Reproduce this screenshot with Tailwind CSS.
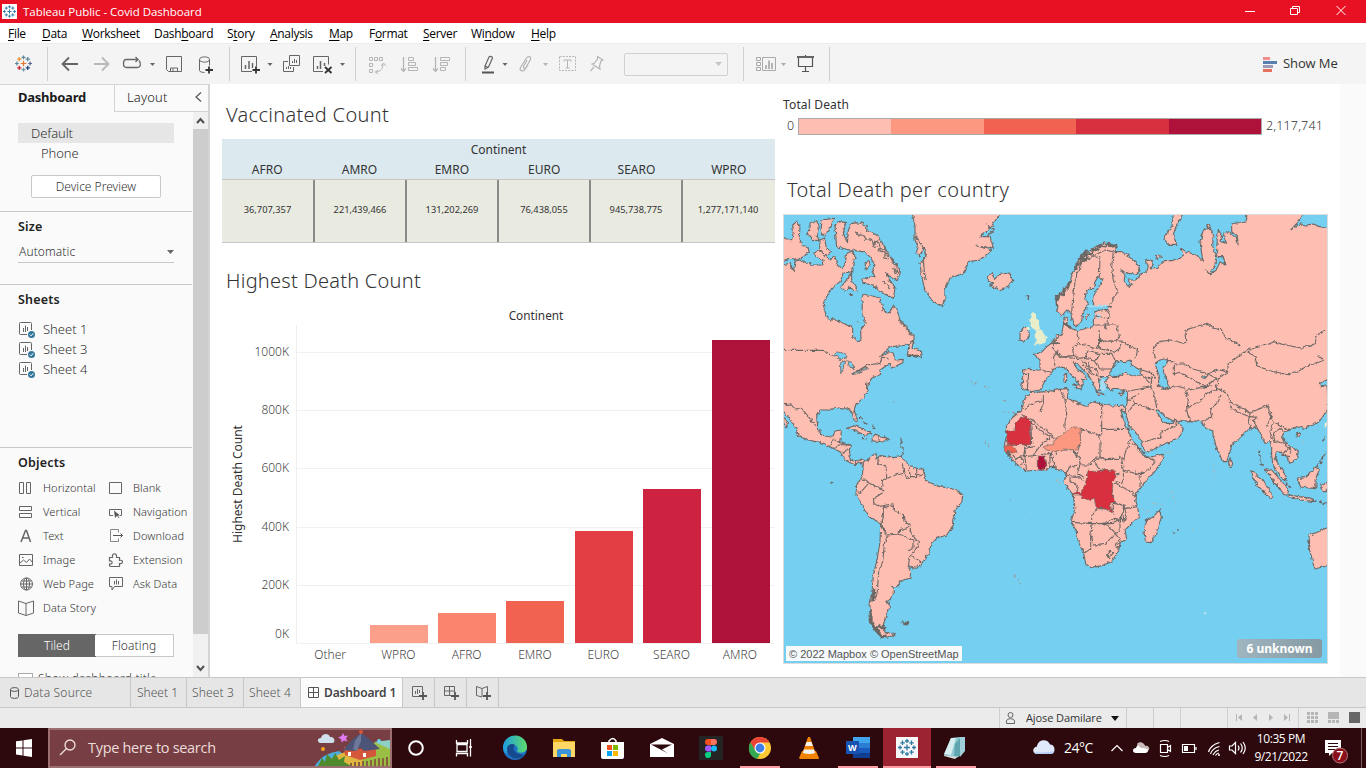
<!DOCTYPE html>
<html lang="en">
<head>
<meta charset="utf-8">
<title>Tableau Public - Covid Dashboard</title>
<script src="https://cdn.jsdelivr.net/npm/@tailwindcss/browser@4"></script>
</head>
<body class="w-[1366px] h-[768px] overflow-hidden bg-white font-['Open_Sans',sans-serif] text-[#333]">
<svg class="hidden">
  <defs>
    <symbol id="mark" viewBox="0 0 18 18"><g stroke-width="1.3" fill="none">
      <path stroke="#e8762c" d="M9 6v6M6 9h6"/><path stroke="#5b879b" d="M9 .5v4M7 2.5h4"/><path stroke="#7099a6" d="M9 13.5v4M7 15.5h4"/>
      <path stroke="#59879b" d="M2 7v4M0 9h4"/><path stroke="#5c6692" d="M16 7v4M14 9h4"/>
      <path stroke="#eb912c" d="M4.500 2v4.500M2.300 4.300h4.500"/><path stroke="#c72035" d="M4.500 11.500v4.500M2.300 13.700h4.500"/><path stroke="#59879b" d="M13.500 2v4.500M11.300 4.300h4.500"/><path stroke="#1f447e" d="M13.500 11.500v4.500M11.300 13.700h4.500"/></g></symbol>
    <symbol id="markblue" viewBox="0 0 18 18"><path stroke="#2f7ba3" stroke-width="1.300" fill="none" d="M9 6v6M6 9h6M9 .5v4M7 2.500h4M9 13.500v4M7 15.500h4M2 7v4M0 9h4M16 7v4M14 9h4M4.500 2v4.500M2.300 4.300h4.500M4.500 11.500v4.500M2.300 13.700h4.500M13.500 2v4.500M11.300 4.300h4.500M13.500 11.500v4.500M11.300 13.700h4.500"/></symbol>
    <symbol id="sheet" viewBox="0 0 17 17"><path d="M8 12.500H1.500a1 1 0 0 1-1-1V1.500a1 1 0 0 1 1-1h10a1 1 0 0 1 1 1V8M4.500 6v4M6.500 3.500v6.500M8.500 5v4" fill="none" stroke="#666"/><circle cx="12.500" cy="12.500" r="3.500" fill="#35789b"/><path d="M10.800 12.500l1.300 1.300 2.200-2.500" stroke="#fff" fill="none"/></symbol>
  </defs>
</svg>

<!-- title bar -->
<header class="flex items-center h-[23px] bg-[#e81123] text-white text-[11.5px]">
  <div class="ml-[2px] w-[15px] h-[15px] bg-white flex items-center justify-center"><svg class="w-[13px] h-[13px]"><use href="#markblue"/></svg></div>
  <div class="ml-[6px] w-[178px] whitespace-nowrap tracking-[-0.03px]">Tableau Public - Covid Dashboard</div>
  <svg class="ml-auto" width="136" height="23" viewBox="1230 0 136 23" fill="none" stroke="#fff"><path d="M1245 11.500h10M1290.500 8.500h7v6h-7zM1292.500 8.500v-2h7v6h-2M1336.500 6l9 9M1345.500 6l-9 9"/></svg>
</header>

<!-- menu -->
<nav class="flex items-center h-5 pt-[2px] pl-2 gap-4 bg-white text-[12px] tracking-[-0.3px] text-black whitespace-nowrap underline-offset-2">
  <span class="w-[18px]"><u>F</u>ile</span><span class="w-6"><u>D</u>ata</span><span class="w-14"><u>W</u>orksheet</span><span class="w-[57px]">Dash<u>b</u>oard</span><span class="w-[27px]">S<u>t</u>ory</span><span class="w-[43px]"><u>A</u>nalysis</span><span class="w-6"><u>M</u>ap</span><span class="w-[38px]">F<u>o</u>rmat</span><span class="w-8"><u>S</u>erver</span><span class="w-11">Wi<u>n</u>dow</span><span><u>H</u>elp</span>
</nav>

<!-- toolbar -->
<div class="flex items-center h-[41px] bg-[#f4f4f4] border-t border-[#ececec]">
  <svg width="47" height="40" viewBox="0 44 47 40"><use href="#mark" x="15" y="55" width="17" height="17"/></svg>
  <svg width="182" height="40" viewBox="47 44 182 40" fill="none" stroke="#666">
    <path d="M47.500 47v34" stroke="#d0d0d0"/>
    <path d="M62 64h16M69 57.500L62.500 64l6.500 6.500" stroke-width="1.800"/>
    <path d="M94 64h15M102 57.500l6.500 6.500-6.500 6.500" stroke="#b8b8b8" stroke-width="1.800"/>
    <path d="M134 67.500h-7.500c-4 0-4-8 0-8h11M135.500 57l2.500 2.500-2.500 2.500M133 67.500h4.500c3.500 0 3.500-5 1.500-7" stroke-width="1.300"/>
    <path d="M150 63h5l-2.500 3z" fill="#666" stroke="none"/>
    <path d="M166.500 56.500h15v15h-13l-2-2zM170.500 71v-3h7v3M173 71v-2.500"/>
    <path d="M199.500 59.500v11c0 1 2 2 5 2M209.500 59.500v6M199.500 59.500c0-3.500 10-3.500 10 0s-10 3.500-10 0"/><path d="M209 66.500v7M205.500 70h7.500" stroke="#333" stroke-width="1.800"/>
  </svg>
  <svg width="126" height="40" viewBox="229 44 126 40" fill="none" stroke="#666">
    <path d="M229.500 47v34" stroke="#d0d0d0"/>
    <path d="M252 71.500h-10.500v-15h15v10"/><path d="M245.500 65v4M249 61v8M252.500 63v5" stroke-width="1.500"/><path d="M256 66.500v7M252.500 70h7.500" stroke="#333" stroke-width="1.800"/>
    <path d="M267.500 63h5l-2.500 3z" fill="#666" stroke="none"/>
    <path d="M289.500 55.500h10v10h-10zM288 61.500h-4.500v10h10v-4.500M292.500 61v2M294.500 59v4M296.500 60v3M286.500 67v2M288.500 66v3M290.500 67v2"/>
    <path d="M323 71.500h-9.500v-15h15v8"/><path d="M317.500 66v3M320.500 61v8M324.500 63v3" stroke-width="1.500"/><path d="M325 67l6.500 6M331.500 67l-6.500 6" stroke="#333" stroke-width="1.800"/>
    <path d="M340 63h5l-2.500 3z" fill="#666" stroke="none"/>
  </svg>
  <svg width="110" height="40" viewBox="355 44 110 40" fill="none" stroke="#b5b5b5">
    <path d="M355.500 47v34" stroke="#d0d0d0"/>
    <path d="M369.500 57.500h3v3h-3zM374.500 57.500h3v3h-3zM379.500 57.500h3v3h-3zM369.500 63.500h3v3h-3zM369.500 69.500h3v3h-3zM375 72c6 0 8-4 8-8M381 66l2.500-3 2.500 3M378 70l-2.500 2 2.500 2"/>
    <path d="M403.500 57v14M401 68.500l2.500 3 2.500-3" stroke-width="1.300"/><path d="M408.500 57.500h5v3h-5zM408.500 62.500h7v3h-7zM408.500 67.500h9v3h-9z"/>
    <path d="M435.500 57v14M433 68.500l2.500 3 2.500-3" stroke-width="1.300"/><path d="M440.500 57.500h9v3h-9zM440.500 62.500h7v3h-7zM440.500 67.500h5v3h-5z"/>
  </svg>
  <svg width="147" height="40" viewBox="465 44 147 40" fill="none" stroke="#b5b5b5">
    <path d="M465.500 47v34" stroke="#d0d0d0"/>
    <path d="M485 66l4-9c.5-1 4-.5 3.500 1l-4 9-3.500 2zM485 66l3.500 1.500" stroke="#666" stroke-width="1.200"/><path d="M482 72.500h12" stroke="#555" stroke-width="2"/>
    <path d="M502.500 63h5l-2.500 3z" fill="#666" stroke="none"/>
    <path d="M527 60l-3.500 6.500c-.5 2 1.500 2.500 2.500 1l4.500-8c1-3-2.500-4-4-1.500l-6 9.500c-1.500 3 2 4.500 4 2.500l3.500-5" stroke-width="1.200"/>
    <path d="M543 63h5l-2.500 3z" fill="#b5b5b5" stroke="none"/>
    <path d="M559.500 56.500h16v14h-16z" stroke-dasharray="2 1.200"/><path d="M564 61.500v-1.500h7v1.500M567.500 60v8M565.500 68h4"/>
    <path d="M597.500 56.500l5.500 3.500-2 1-1.500 5 .5 3-8-5 2.500-1 3-4zM594 67l-3.500 4" stroke-width="1.200"/>
  </svg>
  <div class="ml-3 w-[104px] h-[23px] border border-[#d0d0d0] rounded-[2px] flex items-center justify-end pr-[5px]"><svg width="7" height="4"><path d="M0 0h7L3.500 4z" fill="#c4c4c4"/></svg></div>
  <svg class="ml-[15px]" width="87" height="40" viewBox="743 44 87 40" fill="none" stroke="#aaa">
    <path d="M743.500 47v34M829.500 47v34" stroke="#d0d0d0"/>
    <path d="M756.500 57.500h4v3h-4zM756.500 62.500h4v3h-4zM756.500 67.500h4v3h-4zM762.500 57.500h13v13h-13z"/><path d="M766 65v4M769 60.500v8.500M772 63v6" stroke-width="1.700"/>
    <path d="M781 63h5l-2.500 3z" fill="#aaa" stroke="none"/>
    <path d="M797 57h17" stroke="#555" stroke-width="1.800"/><path d="M798.500 58v8.500h14V58M805.500 55v2M805.500 67v4.500M802 71.500h7" stroke="#555" stroke-width="1.200"/>
  </svg>
  <svg class="ml-auto" width="15" height="15" viewBox="0 0 15 15"><path fill="#f28e8e" d="M0 0h7v3H0z"/><path fill="#5b7fb0" d="M0 4h14v3H0z"/><path fill="#9b9bb5" d="M0 8h10v3H0z"/><path fill="#e8705e" d="M0 12h9v3H0z"/></svg>
  <div class="ml-[5px] mr-7 w-[55px] whitespace-nowrap text-[13px] tracking-[-0.1px] text-[#333]">Show Me</div>
</div>

<main class="flex h-[593px]">
  <!-- side pane -->
  <aside class="flex flex-col w-[210px] h-full bg-[#fafafa] border-t border-r-2 border-[#d4d4d4] font-['Noto_Sans',sans-serif] font-light text-[#333]">
    <div class="flex h-[27px] shrink-0 text-[13px]">
      <div class="w-[114px] pl-[18px] pt-[3px] font-bold text-[#1b1b1b] tracking-[-0.25px]">Dashboard</div>
      <div class="flex-1 flex justify-between border-l border-b border-[#d4d4d4] pl-3 pt-[3px] text-[#222] tracking-[0.15px]">Layout<svg class="mr-[6px] mt-1" width="7" height="10"><path d="M6 .5L1 5l5 4.500" fill="none" stroke="#555" stroke-width="1.200"/></svg></div>
    </div>
    <div class="flex flex-1 min-h-0">
      <div class="w-[192px] h-[565px] overflow-hidden text-[13px]">
        <div class="mt-[11px] ml-[18px] w-[156px] h-5 bg-[#e6e6e6] pl-[13px] leading-5 tracking-[-0.1px]">Default</div>
        <div class="ml-[41px] h-5 leading-5 tracking-[-0.1px]">Phone</div>
        <div class="mt-3 ml-[31px] w-[130px] h-[23px] border border-[#c8c8c8] rounded-[2px] bg-white text-center leading-[21px] text-[12px]">Device Preview</div>
        <div class="mt-[13px] h-[73px] border-t border-[#c8c8c8] pl-[18px] pt-[5px]">
          <div class="leading-5 font-semibold text-[#222] text-[12.5px] tracking-[0.15px]">Size</div>
          <div class="mt-1 w-[156px] h-[22px] pl-px border-b border-[#c8c8c8] flex items-center justify-between text-[12px] tracking-[0.1px]">Automatic<svg width="7" height="4"><path d="M0 0h7L3.500 4z" fill="#666"/></svg></div>
        </div>
        <div class="h-[163px] border-t border-[#c8c8c8] pl-[18px] pt-[5px]">
          <div class="leading-5 font-semibold text-[#222] text-[12.5px] tracking-[0.2px]">Sheets</div>
          <div class="mt-[10px] flex flex-col text-[13px]">
            <div class="h-5 flex items-center gap-[7px]"><svg class="ml-px w-[17px] h-[17px]"><use href="#sheet"/></svg>Sheet 1</div>
            <div class="h-5 flex items-center gap-[7px]"><svg class="ml-px w-[17px] h-[17px]"><use href="#sheet"/></svg>Sheet 3</div>
            <div class="h-5 flex items-center gap-[7px]"><svg class="ml-px w-[17px] h-[17px]"><use href="#sheet"/></svg>Sheet 4</div>
          </div>
        </div>
        <div class="border-t border-[#c8c8c8] pl-[18px] pt-[5px]">
          <div class="leading-5 font-semibold text-[#222] text-[12.5px] tracking-[0.2px]">Objects</div>
          <div class="mt-[3px] grid grid-cols-[90px_84px] text-[11px] tracking-[0.1px] leading-6 whitespace-nowrap">
            <div class="flex items-center gap-[9px]"><svg width="16" height="16" fill="none" stroke="#666"><path d="M1.500 2.500h4v11h-4zM8.500 2.500h4v11h-4z"/></svg>Horizontal</div>
            <div class="flex items-center gap-[9px]"><svg width="16" height="16" fill="none" stroke="#666"><path d="M1.500 2.500h12v11h-12z"/></svg>Blank</div>
            <div class="flex items-center gap-[9px]"><svg width="16" height="16" fill="none" stroke="#666"><path d="M1.500 2.500h12v4h-12zM1.500 9.500h12v4h-12z"/></svg>Vertical</div>
            <div class="flex items-center gap-[9px]"><svg width="16" height="16" fill="none" stroke="#666"><path d="M5 11.500H1.500v-6h12v6H12"/><path d="M6 6.500l6 5-3 .3-2 2.200z" fill="#555" stroke="none"/><path d="M9 11l2 3"/></svg>Navigation</div>
            <div class="flex items-center gap-[9px]"><svg width="16" height="16" fill="none" stroke="#666" stroke-width="1.500"><path d="M3 14L7.500 2.500h1L12.500 14M4.500 10h6.500"/></svg>Text</div>
            <div class="flex items-center gap-[9px]"><svg width="16" height="16" fill="none" stroke="#888"><path d="M10.500 4.500V1.500h-8v12h8v-3"/><path stroke="#555" d="M5 7.500h9.500M12.500 5.500l2 2-2 2"/></svg>Download</div>
            <div class="flex items-center gap-[9px]"><svg width="16" height="16" fill="none" stroke="#666"><path d="M1.500 2.500h13v11h-13zM2 11l3.500-3 3 2.500 3-3.500 3 3.500M4 5.500h1.500"/></svg>Image</div>
            <div class="flex items-center gap-[9px]"><svg width="16" height="16" fill="none" stroke="#666" stroke-width="1.200"><path d="M1.500 5.500h3c-1-5 5-5 4 0h3v3c4-1.500 4 4 0 3v3h-9c-1 0-1-1-1-2.500 3.500 1 3.500-4 0-3z"/></svg>Extension</div>
            <div class="flex items-center gap-[9px]"><svg width="16" height="16" fill="none" stroke="#666"><circle cx="8.500" cy="8" r="6"/><ellipse cx="8.500" cy="8" rx="3" ry="6"/><path d="M8.500 2v12M2.500 8h12M3.500 5h10M3.500 11h10"/></svg>Web Page</div>
            <div class="flex items-center gap-[9px]"><svg width="16" height="16" fill="none" stroke="#666"><path d="M1.500 1.500h13v9h-8l-2.500 3.500v-3.500h-2.500zM6.500 5v3.500M8.500 3.500v5M10.500 5v3.500"/></svg>Ask Data</div>
            <div class="flex items-center gap-[9px]"><svg width="16" height="16" fill="none" stroke="#666"><path d="M8 3.500L.5 1v12l7.500 2.500L15.500 13V1zV15"/></svg>Data Story</div>
          </div>
          <div class="mt-[14px] w-[156px] h-[23px] flex text-[12px] leading-[22px] text-center border border-[#c8c8c8]"><div class="w-[78px] bg-[#666] text-white -m-px leading-[24px]">Tiled</div><div class="flex-1 bg-white tracking-[0.1px]">Floating</div></div>
          <div class="mt-[14px] flex items-start gap-[5px] text-[12px] leading-4 whitespace-nowrap tracking-[0.2px]"><span class="w-[15px] h-[15px] border border-[#aaa] bg-white mt-0.5"></span>Show dashboard title</div>
        </div>
      </div>
      <div class="ml-px w-[15px] bg-[#f0f0f0] flex flex-col items-center">
        <svg width="15" height="17" fill="none" stroke="#505050" stroke-width="2"><path d="M4 11l3.500-4 3.500 4"/></svg>
        <div class="w-full h-[505px] bg-[#cdcdcd]"></div>
        <svg class="mt-auto" width="15" height="17" fill="none" stroke="#505050" stroke-width="2"><path d="M4 6l3.500 4L11 6"/></svg>
      </div>
    </div>
  </aside>

  <!-- left charts -->
  <section class="w-[573px] pl-3 font-['Noto_Sans',sans-serif]">
    <h2 class="mt-[17px] ml-1 h-[28px] text-[20px] leading-[28px] font-light tracking-[0.3px] text-[#333] whitespace-nowrap">Vaccinated Count</h2>
    <div class="mt-[10px] w-[553px] text-[12px] text-[#333]">
      <div class="h-10 bg-[#dce9ef] text-center pt-[1px]">
        <div class="h-5 leading-5">Continent</div>
        <div class="grid grid-cols-6 leading-[19px] -ml-px text-[12px]"><span>AFRO</span><span>AMRO</span><span>EMRO</span><span>EURO</span><span>SEARO</span><span>WPRO</span></div>
      </div>
      <div class="h-16 grid grid-cols-[93px_92px_92px_92px_92px_92px] bg-[#e9eae0] border-y border-[#c6c6c6] text-center text-[9.300px] leading-[60px] divide-x-2 divide-[#8a8a8a]"><span>36,707,357</span><span>221,439,466</span><span>131,202,269</span><span>76,438,055</span><span>945,738,775</span><span class="pr-[2px]">1,277,171,140</span></div>
    </div>
    <h2 class="mt-[24px] ml-1 h-[28px] text-[20px] leading-[28px] font-light tracking-[0.25px] text-[#333] whitespace-nowrap">Highest Death Count</h2>
    <div class="mt-[11px] pl-[75px] w-[553px] h-[19px] text-center text-[11.800px] leading-[19px]">Continent</div>
    <div class="flex h-[318px]">
      <div class="w-8 flex items-center justify-center"><span class="-rotate-90 whitespace-nowrap text-[12px]">Highest Death Count</span></div>
      <div class="w-[35px] text-right text-[12px] font-light leading-4 text-[#444] flex flex-col pt-[19px]">
        <span class="h-[58px]">1000K</span><span class="h-[58px]">800K</span><span class="h-[59px]">600K</span><span class="h-[58px]">400K</span><span class="h-[49px]">200K</span><span>0K</span>
      </div>
      <div class="ml-[7px] w-[479px] border-l border-[#eee] grid">
        <div class="col-start-1 row-start-1 flex flex-col pt-[27px]"><i class="h-[58px] border-t border-[#f0f0f0]"></i><i class="h-[58px] border-t border-[#f0f0f0]"></i><i class="h-[59px] border-t border-[#f0f0f0]"></i><i class="h-[58px] border-t border-[#f0f0f0]"></i><i class="h-[58px] border-t border-[#f0f0f0]"></i></div>
        <div class="col-start-1 row-start-1 grid grid-cols-7 items-end justify-items-center ml-[-1px] relative">
          <i></i>
          <i class="w-[58px] bg-[#fb9f8b]" style="height:18px"></i><i class="w-[58px] bg-[#fa846e]" style="height:30px"></i><i class="w-[58px] bg-[#f26250]" style="height:42px"></i><i class="w-[58px] bg-[#e33e43]" style="height:112px"></i><i class="w-[58px] bg-[#cd2340]" style="height:154px"></i><i class="w-[58px] bg-[#ae123a]" style="height:303px"></i>
        </div>
      </div>
    </div>
    <div class="ml-[74px] w-[478px] grid grid-cols-7 text-center text-[12px] font-light leading-[22px] text-[#444] border-t border-[#f0f0f0]"><span>Other</span><span>WPRO</span><span>AFRO</span><span>EMRO</span><span>EURO</span><span>SEARO</span><span>AMRO</span></div>
  </section>

  <!-- legend and map -->
  <section class="w-[557px] font-['Noto_Sans',sans-serif]">
    <div class="mt-[12px] h-[18px] text-[12px] leading-[18px] tracking-[0.15px]">Total Death</div>
    <div class="mt-[3px] h-[19px] flex items-center text-[12.500px] font-light text-[#333]">
      <span class="ml-1 w-[11px]">0</span>
      <div class="w-[464px] h-[17px] border border-[#aaa] flex"><i class="flex-1 bg-[#ffbeb2]"></i><i class="flex-1 bg-[#fc9880]"></i><i class="flex-1 bg-[#f26250]"></i><i class="flex-1 bg-[#d9303f]"></i><i class="flex-1 bg-[#ae123a]"></i></div>
      <span class="ml-1 tracking-[0.15px]">2,117,741</span>
    </div>
    <h2 class="mt-[40px] ml-1 h-[28px] text-[20px] leading-[28px] font-light tracking-[0.37px] text-[#333] whitespace-nowrap">Total Death per country</h2>
    <div class="relative mt-[10px] w-[545px] h-[450px]">
      <svg class="block" width="545" height="450" viewBox="783 214 545 450">
        <defs><filter id="rough" filterUnits="userSpaceOnUse" x="775" y="206" width="561" height="466" color-interpolation-filters="sRGB"><feTurbulence type="fractalNoise" baseFrequency=".25" numOctaves="2" seed="4"/><feDisplacementMap in="SourceGraphic" scale="4" xChannelSelector="R" yChannelSelector="G"/></filter></defs>
        <path fill="#75cff1" d="M783 214h545v450H783z"/>
        <g fill="#ffbeb2" stroke="#6b6764" stroke-width="3.300" stroke-linejoin="round" filter="url(#rough)">
          <!-- North Atlantic: the Americas, Greenland, Iceland -->
          <g transform="translate(780 210) scale(.33333)">
            <g>
            <path d="M-10 168L30 160 40 185 45 155 60 150 80 158 100 165 125 165 130 150 108 140 100 130 120 122 135 135 150 150 165 140 170 160 185 175 195 165 200 130 215 125 225 140 218 165 215 185 190 190 180 215 155 235 140 260 130 285 135 305 145 328 180 332 200 345 218 352 218 378 235 397 243 390 242 360 258 340 245 310 247 290 245 265 250 252 275 258 300 265 306 285 310 300 325 312 333 300 340 285 350 300 360 330 375 345 390 365 402 375 402 392 385 405 360 408 330 410 315 425 300 442 325 425 340 430 345 450 370 448 368 458 335 475 330 462 318 468 300 480 302 493 275 505 265 520 262 545 250 565 228 582 222 600 230 622 232 633 222 630 215 605 205 593 190 597 165 592 150 600 120 600 110 620 113 650 125 675 145 680 160 677 165 663 185 660 180 690 178 698 195 702 212 707 205 730 212 750 228 755 245 747 258 755 255 768 240 757 225 765 195 750 180 725 150 710 130 700 85 690 55 677 48 655 30 628 11 605-10 590z"/>
            <path d="M-10 50L15 85 35 90 40 65 38 45 50 35 60 48 58 80 65 105 85 115 88 125 70 140 50 150 30 145-10 158z"/>
            <path d="M165 50L175 35 197 38 190 70 202 98 205 60 215 40 240 38 258 45 262 62 290 75 310 105 330 140 362 185 352 212 315 190 345 232 340 265 300 245 280 225 250 220 245 205 285 200 275 180 285 165 270 140 250 125 200 118 170 110z"/>
            <path d="M90 38L110 32 118 50 108 80 118 90 100 92 80 70 90 60zM126 30l35-5-8 25-20 28-10-15zM120 90l14-6 5 30 15 10-20 15-15-20zM215 185l0 25 18 30-12 2-15-10-8 12-15-12 15-20zM255 158l12-4 4 15-12 10zM205 250l12 0-3 10zM382 434l6-32 12-8-4 20 25 8 3 22-14-6z"/>
            <path d="M395 0L405 50 405 90 415 110 408 130 420 138 430 110 438 140 420 160 425 200 435 240 455 270 485 290 495 270 495 240 510 205 550 190 565 155 600 150 635 120 600 110 640 112 630 80 600 80 625 60 640 40 665 5z"/>
            <path d="M625 200l10-12 8 20 15-15 30-4 10 22-16 20-24 8-25-12 5-8-13-5zM200 655l25-8 25 10 25 15-20 4-25-12zM285 672l15 8 30 8-25 8-30-4zM11 618l14 25-5 10-9-15zM720 368l10-16 15 2 3 25-18 17-10-3z"/>
            <path fill="none" stroke-width="4" d="M240 620l8 8M250 635l15 10M275 645l10 12M310 680l20 8M740 257l8 3M745 252v18M365 690l2 12M369 710l-2 30M245 686l15 0"/>
            </g>
            <g fill="none" stroke-width="4" stroke="#77706c"><path d="M225 65l10 15 10-10 12 18 15-5 8 18 15-5 8 20 12 0 4 18 12 5 8 18 10 8 4 15-10 8M232 335l8 0M405 80l20 25M430 150l5 60M260 515v25M355 330l45 50M615 40l25 20-20 20M590 105l25 10M265 85l8 10M285 92l-6 18 14 2M305 110l-10 12 18 4M318 130l-6 14 14 2M340 170l14 20 6-8M310 215l20 20M30 160l8 20"/></g>
            <path fill="#75cff1" stroke-width="2.500" d="M153 440l20-14 25 6 3 12-15-2-5 10-8-16zM182 458l12-5-6 30-6 8zM200 452l18 6 4 22-12-12zM215 490l30-8-10 8-18 4zM243 478l20-5-10 8z"/>
            <path fill="none" d="M11 421H130L155 435M218 492L262 465 300 460 305 445 325 445M11 584L35 582 50 600 65 595 85 620 108 648M60 677l20 15M148 708l12-20 18 8M165 715l12-10 35-2M183 738l20-22M228 750l-2 15M297 672v20M382 436h35"/>
            <g fill="#f2eedd" stroke-width="2"><path stroke="none" fill="#e9edc9" d="M750 320L758 310 770 312 768 325 776 335 778 350 788 365 800 382 796 398 762 407 768 390 764 375 770 362 758 355 748 335zM735 352l12-4 2 12-10 2z"/><path fill="#eee9e0" d="M675 661L697 620 705 614 731 613 731 626 708 628 706 650 700 663z"/></g>
            <path stroke="#9b9793" stroke-width="4" stroke-dasharray="5 9" fill="none" d="M572 514l55 20M668 606l35 2M670 572h10M340 576h3"/>
          </g>
          <!-- South America -->
          <g transform="translate(780 435) scale(.33333)">
            <path d="M250 84L280 60 290 55 287 72 300 62 340 68 365 65 375 80 400 97 430 105 440 140 455 145 480 155 500 158 530 165 548 180 545 205 525 225 520 270 500 300 470 310 452 330 450 350 425 385 410 400 385 395 392 410 390 430 358 438 358 455 338 455 342 470 335 490 320 500 332 515 318 540 310 570 315 590 345 600 320 610 290 595 272 560 270 510 277 460 280 420 292 370 300 320 302 268 265 240 228 180 230 150 247 125z"/>
            <path fill="none" d="M295 65l-2 22 25 8 2 35-12 5-5 30M322 130l25-10 25-5-5-30M372 115l10 15 8-5-2-25M390 125l20 0 0-25M412 122l22-8M245 133l35 18 28 12 0 10-28 18 2 15 20 8 35-8M232 170l10 2 22-25M302 268l8-20 0-30 30-8 0 15 30 14 2 20 18 12-3 20M310 218l-8 48 20 40-8 14-6 60-12 30-4 60-10 30M322 300l35-3 2-12 25-8M357 297l20 10 25 8 0 20-18 10M387 277l8 20 20 25-2 12-24 30-4 32M395 362l28 22M303 265l17 32"/>
            <path fill="none" stroke-width="9" d="M282 460l-4 40M272 520l2 45 22 30M285 575l20 30 15-2M295 570l20 15"/>
            <path fill="none" stroke-width="6" d="M365 562l22 3M370 568l14 0M152 142l8 3M340 466l2 8"/><path fill="none" stroke-width="4" stroke-dasharray="7 4" d="M363 10v28"/>
            <path stroke="#9b9793" stroke-width="4" stroke-dasharray="5 9" fill="none" d="M613 20l15 12M565 166h3M690 196h3M751 253h3M704 421l20 28"/>
          </g>
          <!-- Europe and Asia -->
          <g transform="translate(1050 210) scale(.33333)">
            <path d="M20 265L40 240 62 210 70 180 85 155 110 130 140 108 165 98 190 105 200 118 190 125 215 125 240 140 265 165 270 182 258 192 235 190 212 180 225 195 222 215 238 232 245 222 235 210 260 210 270 195 290 185 295 168 287 152 303 150 310 160 302 180 320 175 345 152 365 152 390 145 400 135 392 115 410 125 440 135 460 155 455 130 450 95 460 60 480 55 490 70 488 110 497 140 495 165 480 188 463 180 480 192 500 180 510 155 525 165 520 140 500 140 500 110 505 60 515 75 510 95 530 100 520 75 535 65 560 85 565 105 562 80 545 65 545 42 590 32 590 0 765 0 745 35 722 60 750 42 770 45 790 42 810 50 845 58 845 500 830 510 805 522 812 530 831 528 835 595 815 625 790 645 760 655 740 650 720 660 705 665 695 680 705 695 725 710 745 725 740 745 720 760 712 745 695 728 680 725 675 745 690 770 705 790 710 805 700 810 680 785 668 760 665 735 665 715 660 695 645 700 637 685 625 660 615 650 600 655 575 678 545 705 540 725 530 755 518 755 500 715 490 680 488 662 465 655 455 635 420 632 380 635 365 630 345 620 325 600 318 600 335 630 350 640 370 640 375 625 385 640 398 650 392 675 385 683 350 700 290 725 285 725 275 695 255 665 240 650 225 610 226 600 232 575 230 545 215 540 195 538 180 542 170 530 165 515 180 498 200 500 225 490 250 498 272 495 270 480 245 465 240 450 225 455 205 455 200 450 190 470 180 490 178 500 150 500 160 512 145 505 150 540 140 545 130 520 118 500 100 480 85 465 70 455 80 475 100 490 110 505 98 510 100 525 90 530 80 510 60 490 50 475 30 470 10 478 5 490-15 510-25 535-55 545-65 540-85 535-82 510-82 480-65 478-30 480-30 450-50 430-28 430-10 410 5 400 20 375 35 372 40 345 42 325 55 322 50 340 60 355 85 362 120 352 130 350 130 330 135 305 150 300 170 298 185 290 140 288 130 285 132 255 150 225 158 208 145 200 135 215 130 235 110 240 105 265 115 280 110 295 98 310 95 335 78 350 68 340 62 310 50 300 35 318 20 300z"/>
            <path d="M370 14l30-5-20 35-10 30 10 32-20 0-18-18 12-25 12-15zM316 138l10-6 8 8-12 8zM470 48l8-4 4 8-8 4zM68 525l30 0-5 15zM205 550l18-6-8 10zM42 495l8-4 0 25-8 0zM138 545l25 8-15 3zM105 322l8-12 5 4-8 12zM740 672l12-5-6 15-8-2zM540 745l8 15-5 15-8-18zM600 780l40 30 30 50-10 4-40-40z"/>
            <path fill="#75cff1" d="M315 460L330 450 352 445 350 462 336 475 348 500 356 532 335 538 325 522 328 500zM455 502l20-8-10 12z"/>
            <path fill="#a6dcf0" stroke="none" d="M110 288l65-6v8l-60 2zM145 310l8 2-2 15-10-2zM150 500l15 10 2 30-14 4z"/>
            <path fill="none" stroke-width="7" d="M15 270l10-5 5-15 10 5 2-20 10 0 5-15 6-6M70 178l8-2 2-15 12 0 3-16 12 4 4-18 14 2 4-14 14 2 6-14 18 2 6-8 14 8 12-4 4 10M85 150l10-12 18-18M18 255l4 40M42 340l22 14"/>
            <path fill="none" d="M65 310L70 240 80 195 95 155 130 138 150 145 148 200M130 138L165 120 190 125 185 170 190 210 202 245 178 288M158 298l20 10-5 35M135 318l42 8M130 345l35 0 5 15M165 345l35 0 8 35-8 12-52 2M80 365l6 35 55 18 8-25-2-35M35 372l-20 20-8 20 25 30 38-5-2-25 22-12M70 435l15 10 20-2 10-22 28 8M100 445l35 5 15-20M148 395l0 22 55 8 10-20M148 395l70-2 15 15 30 10-5 25M140 430l45 0 12 25M150 432l-15 25 15 20 38 0M135 475l10 20M95 450l20 20 20 5M118 455l-2 35M100 465l25 30M115 480l30 20M30 440l45 5M-25 480l35 8M-82 490l18 0-4 50M25 420l-15 22 5 25M0 400l30 0M5 390l15 12M262 475l30 10 15 5 10 15M270 490l30 30M285 500l20 5-2 25-70 14M300 528l10 15 10 50M232 545l0 30 35-25M235 605l20-25-5-15M255 580l55 20M320 525l35 12 20-10 30 8 10 35-5 30 5 20 8 12M405 542l80-15M410 590l40-15 20-25 30-12-5-15M460 635l25-15-5-20 25-25 8-20M316 445l-6-30 20-20 35-5 35 10 10-5-2-35 30-10 35-10 20 15 20 5 15 25 40 20M590 420l-25 20-30 20-2 25-30-5-30 12-25-10-20-5-25-15-30 0 0 30 15-5 30 15 40 25M350 455l20 0M480 495l20 10-20 15-25 15M590 420l60-15 22-10 35 10 50 10 40-15 0-20 25-20M590 420l25 20 5 25 30 15 65 14 30-10 25-15 50-18-15-15M535 485l-30 20-5 30 30 15 10 25 60 35 20-10 30-15 15 30-15 35M540 590l20 15 40 15M600 610l-5 25 10 25M600 620l20 2-10 10 10 20M655 605l15 30 30 15 20 10M670 635l-10 30 10 30M700 665l-10-10-20 15 5 25 30 5 10 15M705 700l20 30M720 710l-25 25 25 5M380 635l-5 15-40 12-5 25M340 680l-60 15M530 550l-20-15"/>
            <path fill="#f4eacb" stroke="none" d="M824 640l6-5v18l-6-2z"/>
          </g>
          <!-- Africa, Indian Ocean, Australia -->
          <g transform="translate(1050 435) scale(.33333)">
            <path d="M-58-127L-10-130 30-137 55-140 52-110 85-95 110-85 125-100 155-93 185-87 222-90 225-67 212-75 225-35 245 10 262 35 280 62 290 68 340 58 335 80 310 115 285 140 268 165 255 185 262 215 268 245 245 265 225 285 230 310 210 325 205 350 185 380 155 392 120 398 108 390 100 350 85 320 78 285 63 262 75 220 70 180 50 155 42 140 50 125 45 110 25 105 15 95 0 95-10 105-35 105-70 108-110 80-130 55-138 35-130 0-135-15-115-50-85-75-75-110z"/>
            <path d="M290 255l20-10 18-20 6 22-20 60-12 16-15-2-5-30zM845 272L805 290 778 300 775 330 790 385 795 402 845 388zM742 130l25-2 30-32 12 5-10 25-2 35-45-5zM645 100l20 5 40 45 15 30-15 0-35-40zM718 180l30 5 35 5 10 10-40-5-35-8zM812 150l20-5M812 150l8 20 12 0 0-25z"/>
            <path fill="none" stroke-width="5" stroke-dasharray="9 4" d="M628 45l2 22 8 30M655 115l18 30 20 20M705 130l6 20 15 10M800 95l12-15 15-30M795 198l36 8M820 205v5M818 20l8-15"/>
            <path fill="none" d="M-85-62l55 46 30 22M-30-70l10-25 0-25M-60-50l90 70 15-5M-58-44l3 70M-85-75l35-20 25-10M30-137l15 30 5 45-5 22M45-40l0 25 25 10M90-20l60 22 0 70M155-93v78l0 18M157-17h82M90-20l0 45-10 40-12-20-50 0M68 45l20 20 2 25M140 65l-20 25-30 0-8 25 20 12M150 65l15 8 40 0 5-10 12 10 5-25 15-25M150 65l-15 15 10 20 20 5 25 15 18-5M82 90l-20 5-15 20M45 120l40 5 15 15M60 125l0 12 25 15-5 22-15 5M215 70l5 35 35 10 25 0 38-35-35-20M255 110l15 15 0 30M220 105l0 35-25 5M195 145l50 25 10 15M245 10l-12 15 30 10 20 20M190 160l0 45 35 5 2 10 35-5M65 262l60 4 60 0 25-15 10-20 0-20-30-10 0 25-20-5-30 0-15 20 0 15M127 266l-5 35 0 40-20 15M122 300l10 30 35-5 30-30-20-20-25-10M160 265l35-15 15 10 0 30-15 5M195 295l15 20-5 20M215 240l-5 25M220 210l10 30-8 20-3-20M170 358l10-10 8 8-10 12zM198 325l8-2 4 8-8 8-6-5zM-55 30l-5-5 0-5M-45 35l-30 5-5 25M-50 60l30-40 20-10M-40 60l40-5 15 35M5 55l10-15M0 60l0 35M10 95l0-30M-72 68l-5-35 10-5-35 0M-75 68l5 40M-112 60l10 10 20-5M-105 75l15-10 10 10-5 15M-75 65l35-4M20 45l-5 15"/>
            <g stroke-width="2"><path fill="#d9303f" d="M-133-12H-105V-35L-95-47-75-55-60-43-57 30-127 28zM115 105L135 110 155 105 195 108 198 125 188 140 188 165 190 190 195 200 180 205 185 225 190 235 165 222 138 215 133 190 118 195 100 190 92 180 68 180 72 174 92 172 105 150z"/>
            <path fill="#fc9880" d="M15 15L68-25 90-20 92 25 80 45 40 42 15 50-10 45-22 35 8 28z"/>
            <path fill="#f26250" d="M-138 40L-130 28-112 28-98 52-132 50z"/><path fill="#ae123a" d="M-38 65L-15 63-12 98-32 106-38 100z"/></g>
            <path fill="none" stroke-width="6" d="M-132 50l16 8M-130 56l12 6"/>
            <path stroke="#aeb4b2" stroke-width="4" stroke-dasharray="5 9" fill="none" d="M492 92l2 55M365 170l12 45M280 222l15 8M305 205l35 6M423 281h4M345 52h18M20 130l15 20M760 20v10"/>
            <path fill="none" stroke="#77706c" stroke-width="5" d="M367 291h5M381 285h5"/><path stroke="#eee" fill="none" d="M462 535h6"/>
          </g>
        </g>
        <path fill="none" stroke="#dcdcdc" d="M783.500 214.500h544v449h-544z"/>
      </svg>
      <div class="absolute left-[3px] bottom-[3px] w-[176px] h-[15px] bg-[#f6fafc] text-[11px] leading-[16px] pl-[3px] font-['Liberation_Sans',sans-serif] text-[#555] whitespace-nowrap">© 2022 Mapbox © OpenStreetMap</div>
      <div class="absolute right-[6px] bottom-[6px] w-[85px] h-[19px] rounded-[3px] bg-gradient-to-r from-[#9fb5bf] to-[#869aa3] text-white font-bold text-[12px] leading-[19px] text-center whitespace-nowrap">6 unknown</div>
    </div>
  </section>
  <div class="flex-1 bg-[#fafafa]"></div>
</main>

<!-- sheet tabs -->
<div class="flex h-[31px] bg-[#e6e6e6] border-y border-[#c8c8c8] text-[12px] text-[#555] font-light leading-[30px] font-['Noto_Sans',sans-serif] whitespace-nowrap">
  <div class="w-[131px] border-r border-[#c8c8c8] pl-[10px] flex items-center gap-[5px] tracking-[0.2px]"><svg width="9" height="12" fill="none" stroke="#555"><path d="M.5 2.500v7c0 2.500 8 2.500 8 0v-7c0-2.500-8-2.500-8 0s8 2.500 8 0"/></svg>Data Source</div>
  <div class="w-14 border-r border-[#c8c8c8] pl-[6px]">Sheet 1</div>
  <div class="w-[57px] border-r border-[#c8c8c8] pl-[5px] tracking-[0.15px]">Sheet 3</div>
  <div class="w-[57px] border-r border-[#c8c8c8] pl-[5px] tracking-[0.15px]">Sheet 4</div>
  <div class="w-[102px] border-r border-[#c8c8c8] bg-[#fbfbfb] flex items-center pl-[7px] gap-[5px] font-semibold text-[#444] text-[12px] tracking-[-0.15px] leading-7"><svg width="11" height="11" fill="none" stroke="#555"><path d="M.5.5h10v10H.5zM5.500 0v11M0 5.500h11"/></svg>Dashboard 1</div>
  <div class="w-8 border-r border-[#c8c8c8] flex items-center justify-center"><svg width="16" height="16" fill="none" stroke="#666"><path d="M9 11.500H1.500v-10h10V7M4.500 6v3M6.500 4v5M8.500 5v3"/><path stroke-width="1.800" stroke="#555" d="M12 7v8M8 11h8"/></svg></div>
  <div class="w-8 border-r border-[#c8c8c8] flex items-center justify-center"><svg width="16" height="16" fill="none" stroke="#666"><path d="M9 10.500H1.500v-9h10V7M6.500 1.500v9M1.500 6h10"/><path stroke-width="1.800" stroke="#555" d="M12 7v8M8 11h8"/></svg></div>
  <div class="w-8 border-r border-[#c8c8c8] flex items-center justify-center"><svg width="16" height="16" fill="none" stroke="#666"><path d="M7 12L1.500 10.500v-9L7 3.500l5.500-2V7M7 3.500V12"/><path stroke-width="1.800" stroke="#555" d="M12 7v8M8 11h8"/></svg></div>
</div>

<!-- status bar -->
<div class="flex h-5 bg-[#ebebeb] justify-end items-stretch text-[11px] text-[#333]">
  <div class="w-[127px] border-l border-[#cfcfcf] flex items-center pl-[5px]"><svg width="12" height="14" fill="none" stroke="#666"><circle cx="5.500" cy="4" r="2.500"/><path d="M1.500 12.500v-2.500c0-3 8-3 8 0v2.500z"/></svg><span class="ml-[9px] w-[77px] whitespace-nowrap tracking-[-0.1px]">Ajose Damilare</span><svg class="ml-[8px]" width="8" height="5"><path d="M0 0h8L4 5z" fill="#111"/></svg></div>
  <div class="w-[27px] border-l border-[#cfcfcf]"></div><div class="w-[27px] border-l border-[#cfcfcf]"></div><div class="w-[47px] border-l border-[#cfcfcf]"></div>
  <svg width="139" height="20" viewBox="1227 708 139 20"><path stroke="#cfcfcf" d="M1227.500 708v20M1298.500 708v20"/><path fill="#b5b5b5" d="M1236 714h1v7h-1zM1242 714v7l-4-3.500zM1257 714v7l-4-3.500zM1269 714v7l4-3.500zM1284 714v7l4-3.500zM1289 714h1v7h-1z"/><path fill="#b5b5b5" d="M1307 712h3v3h-3zM1311 712h3v3h-3zM1315 712h3v3h-3zM1307 716h3v3h-3zM1311 716h3v3h-3zM1315 716h3v3h-3zM1307 720h3v3h-3zM1311 720h3v3h-3zM1315 720h3v3h-3zM1328 712h11v7h-11zM1328 720h3v3h-3zM1332 720h3v3h-3zM1336 720h3v3h-3z"/><path fill="#666" d="M1349 712h11v11h-11z"/></svg>
</div>

<!-- taskbar -->
<footer class="flex h-10 bg-[#2d080c] text-white">
  <svg width="48" height="40" viewBox="0 728 48 40" fill="#fff"><path d="M16 741.300l6.500-.9v7H16zM23.500 740.200l8.500-1.200v8.400h-8.500zM16 748.500h6.500v7l-6.500-.9zM23.500 748.500H32v8.500l-8.500-1.200z"/></svg>
  <div class="w-[344px] h-10 bg-[#773f43] border-2 border-[#9c6f72] flex items-center">
    <svg class="ml-[9px]" width="18" height="18" fill="none" stroke="#f0e0e0" stroke-width="1.300"><circle cx="11" cy="6" r="5"/><path d="M7.500 9.500L1 16"/></svg>
    <div class="ml-[11px] w-[128px] whitespace-nowrap text-[14.500px] tracking-[-0.3px] text-[#ecdcdc]">Type here to search</div>
    <svg class="ml-auto" width="76" height="36" viewBox="314 730 76 36">
      <path fill="#4aaede" d="M315 766q6-12 24-15l20 15z"/><path fill="#e0b540" d="M326 766q8-14 28-15l36-4v19z"/><path fill="#9bbf45" d="M362 752q8-12 28-11v25h-26z"/><path fill="#8fd0c5" d="M374 742l16-2v9z"/><path fill="#4f8a2c" d="M318 766l4-8 3 4 2-8 5 5 3-6 4 7 6-4-1 6 7 4z"/>
      <path fill="#d4573c" d="M344 747l14 2 18-2v9l-16 4-15-5z"/><path fill="#4c5578" d="M361 733l-8 6-10 11 12 1 5-4 4 4 16-2-12-11z"/><path fill="#6f789b" d="M361 733l-6 8-2 8 4 2 4-10z"/><path fill="#fff" d="M348 752h3v4h-3zM363 753h3v4h-3z"/><circle cx="361" cy="732" r="2" fill="#d4573c"/>
      <path fill="#86603c" d="M350 766v-3h2v3zM354 766v-4h2v4zM358 766v-4h2v4zM362 766v-5h2v5zM366 766v-5h2v5zM370 766v-6h2v6zM374 766v-7h2v7zM378 766v-8h2v8zM382 766v-8h2v8zM386 766v-9h2v9z"/>
      <path fill="#cfe0ec" d="M320 743c-3-1-3-5 1-5 1-5 8-5 9-1 5-1 6 6 2 6z"/><path fill="#e07af0" d="M343 733l1.500 3 3.500-.5-2 3 1.500 3-3.500-1-2.500 2-.5-3.500-3-1.500 3.500-1.500z"/><circle cx="323" cy="749" r="2" fill="#f2a51e"/><circle cx="379" cy="741" r="2" fill="#6fd3ea"/>
    </svg>
  </div>
  <svg width="568" height="40" viewBox="392 728 568 40">
    <defs><linearGradient id="eg" x1="0" y1="0" x2="1" y2="0"><stop offset="0" stop-color="#1c9de0"/><stop offset="1" stop-color="#5fdc6a"/></linearGradient></defs>
    <circle cx="416" cy="748" r="6.800" fill="none" stroke="#fff" stroke-width="2"/>
    <path fill="none" stroke="#fff" stroke-width="1.300" d="M456.500 740v3h11v-3M457 744.500h10v7h-10zM456.500 756.500v-3h11v3M470.500 739v17.500M469 747h3"/>
    <circle cx="515" cy="748" r="12" fill="#1d70c4"/><path fill="url(#eg)" d="M503 747a12 12 0 0 1 24 1c0 5-9 6-10 3 2-4-1-6-4-6-5 0-7 5-6 9-3-2-4-4-4-7z"/><path fill="#164a8d" d="M507 748c1-4 6-5 8-3-3 3-2 9 9 10-5 6-16 5-17-7z"/>
    <path fill="#e5a50c" d="M553 739h9l2 2h11v4h-22z"/><path fill="#ffd766" d="M553 742h22v15h-22z"/><path fill="#3c94d8" d="M557 757v-6q0-2 2-2h10q2 0 2 2v6h-4v-3h-6v3z"/>
    <path d="M609 744v-3q4-5 7 0v3" fill="none" stroke="#fff" stroke-width="1.500"/><path fill="#fff" d="M601 742h23v15q0 2-2 2h-19q-2 0-2-2z"/><path fill="#f25022" d="M607 745h5v5h-5z"/><path fill="#7fba00" d="M613 745h5v5h-5z"/><path fill="#00a4ef" d="M607 751h5v5h-5z"/><path fill="#ffb900" d="M613 751h5v5h-5z"/>
    <path fill="#fff" d="M650 744l12-6 12 6v13h-24z"/><path fill="#2d080c" d="M651 744.500h21l-10 5 6 4z"/>
    <path fill="#242424" d="M699 736h24v24h-24z"/><path fill="#f24e1e" d="M708 739h3v6h-3a3 3 0 0 1 0-6z"/><path fill="#ff7262" d="M711 739h3a3 3 0 0 1 0 6h-3z"/><path fill="#a259ff" d="M708 745.500h3v6h-3a3 3 0 0 1 0-6z"/><circle cx="714" cy="748.500" r="3" fill="#1abcfe"/><path fill="#0acf83" d="M708 752h3v2.500a3 3 0 1 1-3-2.500z"/>
    <circle cx="760" cy="748" r="11" fill="#fcc934"/><path fill="#ea4335" d="M750.500 742.500a11 11 0 0 1 19 0H760l-5 8z"/><path fill="#34a853" d="M750.500 742.500L755.500 751l5 2-3.500 6a11 11 0 0 1-6.500-16.500z"/><circle cx="760" cy="748" r="5.500" fill="#fff"/><circle cx="760" cy="748" r="4.400" fill="#3f7ee8"/>
    <path fill="#f08300" d="M799 758l3-7h14l3 7q0 1-1 1h-18zM808 737h2l6 17q-7 3-14 0z"/><path fill="#f2f2f2" d="M806.500 742h5l1.300 4h-7.600zM804 749.500h10l1.200 3.500q-6 2-12.400 0z"/>
    <path fill="#41a5ee" d="M853 737h17v6h-17z"/><path fill="#2b7cd3" d="M853 743h17v5h-17z"/><path fill="#185abd" d="M853 748h17v5h-17z"/><path fill="#103f91" d="M853 753h17v5h-17z"/><path fill="#1852b0" d="M846 741h13v13h-13z"/><text x="848" y="751" font-size="9" font-weight="700" fill="#fff" font-family="Open Sans">W</text>
    <path fill="#9b2430" d="M883 728h48v40h-48z"/><path fill="#f7f7f7" d="M896 737h22v21h-22z"/><use href="#markblue" x="898" y="738.500" width="18" height="18"/>
    <path fill="#8fcad2" d="M951 738l9-1v19l-4 2-12-3z"/><path fill="#d6eef0" d="M951 738l5 0-5 17-7-1z"/><path fill="#5fa5b0" d="M955 744l5-6v18l-6 0z"/><path fill="#ddd" d="M944 755l13 2-2 2-11-3z"/>
    <path fill="#ff9ca3" d="M740 766h40v2h-40zM838 766h40v2h-40zM883 766h48v2h-48zM936 766h24v2h-24z"/>
  </svg>
  <svg width="100" height="40" viewBox="960 728 100 40"><path fill="#ff9ca3" d="M960 766h16v2h-16z"/><path fill="#9fd0da" d="M960 737h5v14l-5 6z"/><path fill="#dfe9fa" d="M1037 754c-5 0-5-7 0-7.500 1-8 11-8 13-2 5-1 7 9.500 0 9.500z"/><path fill="#b4cdf5" d="M1033.500 751q3 3 21 0-1 3-4 3h-13q-3 0-4-3z"/></svg>
  <div class="ml-1 w-[31px] leading-10 text-[14px] tracking-[-0.5px] whitespace-nowrap">24°C</div>
  <svg class="ml-[11px]" width="144" height="40" viewBox="1106 728 144 40" fill="none" stroke="#fff" stroke-width="1.200">
    <path d="M1111.500 751l5.500-5.500 5.500 5.500"/>
    <path stroke="none" fill="#fff" d="M1136 753c-4 0-4-5 0-5 2-6 8-5 9-2 4-1 5 7 0 7z"/><path stroke="none" fill="#cbbcbc" d="M1137 744c2-3 7-2 8 2 3-1 5 2 4 4-4-3-9 0-12-6z"/>
    <path d="M1160.500 744.500h7v8h-7zM1167.500 747.500l3-2v6l-3-2M1160 741.500q5-2 9 0M1160 755.500q5 2 9 0"/>
    <path d="M1182.500 744.500h12v8h-12zM1196 747v3"/><path stroke="none" fill="#fff" d="M1184 746h4v5h-4z"/>
    <path d="M1208.500 752q2-7 11-9.500M1210.500 754q2-6 9-7.500M1213 755q2-4 6-5M1215.500 755.500q1-2 3.500-2.500"/><circle cx="1219" cy="755" r="1" fill="#fff" stroke="none"/>
    <path d="M1229.500 746v4h2.500l3.500 3.500v-11l-3.500 3.500zM1238 745.500q2 2.500 0 5M1240.500 743.500q3.500 4.500 0 9M1243 742q4.500 6 0 12"/>
  </svg>
  <div class="w-[62px] pt-[2px] text-center text-[12px] leading-[18px] tracking-[-0.4px] whitespace-nowrap">10:35 PM<br>9/21/2022</div>
  <svg class="ml-[9px]" width="45" height="40" viewBox="1321 728 45 40"><path fill="#fff" d="M1325 740h16v13h-9l-3 3v-3h-4z"/><path stroke="#2d080c" stroke-width="1.200" d="M1328 743.500h10M1328 746.500h10M1328 749.500h8"/><circle cx="1340" cy="755.500" r="7.500" fill="#8b0f1a" stroke="#b0777b"/><text x="1336.500" y="760" font-size="12" font-weight="600" fill="#fff" font-family="Open Sans">7</text><path stroke="#7d5c5e" d="M1361.500 728v40"/></svg>
</footer>
</body>
</html>
